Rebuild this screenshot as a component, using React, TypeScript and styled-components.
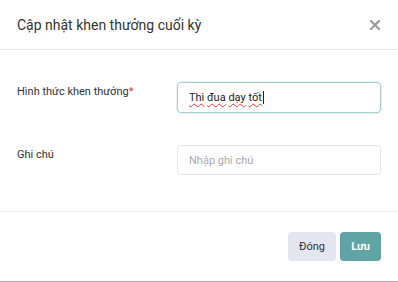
import React from "react";
import styled, { createGlobalStyle } from "styled-components";

const Global = createGlobalStyle`
  html, body { margin: 0; padding: 0; background: #fff; }
  body { font-family: Roboto, "Noto Sans", Arial, sans-serif; }
`;

const Modal = styled.div`
  width: 398px;
  height: 282px;
  box-sizing: border-box;
  background: #fff;
  border-bottom: 1px solid #a9a9a9;
  display: flex;
  flex-direction: column;
`;

const Header = styled.div`
  height: 50px;
  box-sizing: border-box;
  padding: 0 17px;
  display: flex;
  align-items: center;
  justify-content: space-between;
  border-bottom: 1px solid #ececec;
`;

const Title = styled.h2`
  margin: 0;
  font-size: 14px;
  font-weight: 400;
  color: #333;
`;

const Close = styled.button`
  border: 0;
  background: none;
  padding: 0;
  width: 12px;
  height: 12px;
  display: flex;
  align-items: center;
  justify-content: center;
  cursor: pointer;
`;

const Body = styled.div`
  flex: 0 0 auto;
  height: 162px;
  box-sizing: border-box;
  padding: 32px 17px 0 17px;
  display: flex;
  flex-direction: column;
  gap: 32px;
  border-bottom: 1px solid #ececec;
`;

const Row = styled.div`
  display: flex;
  align-items: flex-start;
`;

const Label = styled.label`
  width: 160px;
  flex: 0 0 160px;
  font-size: 11px;
  color: #333;
  padding-top: 3px;
`;

const Req = styled.span`
  color: #e53935;
`;

const Field = styled.div<{ $focused?: boolean; $h: number }>`
  flex: 1;
  height: ${(p) => p.$h}px;
  box-sizing: border-box;
  border: 1px solid ${(p) => (p.$focused ? "#a6cfcf" : "#e6e6e6")};
  border-radius: 4px;
  box-shadow: ${(p) => (p.$focused ? "0 0 0 1px rgba(166,207,207,0.25)" : "none")};
  padding: 0 11px;
  display: flex;
  align-items: center;
  font-size: 11px;
  color: #222;
`;

const Word = styled.span`
  text-decoration: underline wavy #e53935;
  text-decoration-thickness: 1px;
  text-underline-offset: 2px;
`;

const Caret = styled.span`
  display: inline-block;
  width: 1px;
  height: 13px;
  background: #222;
  margin-left: 1px;
`;

const Placeholder = styled.span`
  color: #a8a8b0;
`;

const Footer = styled.div`
  flex: 1;
  padding: 20px 17px 0;
  display: flex;
  justify-content: flex-end;
  align-items: flex-start;
  gap: 4px;
`;

const Btn = styled.button<{ $primary?: boolean }>`
  height: 29px;
  width: ${(p) => (p.$primary ? 41 : 48)}px;
  padding: 0;
  border: 0;
  border-radius: 4px;
  font-family: inherit;
  font-size: 11px;
  font-weight: ${(p) => (p.$primary ? 700 : 400)};
  background: ${(p) => (p.$primary ? "#60a4a5" : "#e3e6ef")};
  color: ${(p) => (p.$primary ? "#fff" : "#333")};
  cursor: pointer;
`;

export default function App() {
  return (
    <>
      <Global />
      <Modal>
        <Header>
          <Title>Cập nhật khen thưởng cuối kỳ</Title>
          <Close aria-label="Đóng">
            <svg width="10" height="10" viewBox="0 0 10 10">
              <path d="M1 1L9 9M9 1L1 9" stroke="#9a9a9a" strokeWidth="2.2" strokeLinecap="square" />
            </svg>
          </Close>
        </Header>
        <Body>
          <Row>
            <Label>
              Hình thức khen thưởng<Req>*</Req>
            </Label>
            <Field $focused $h={31}>
              <Word>Thi</Word>&nbsp;<Word>đua</Word>&nbsp;<Word>dạy</Word>&nbsp;<Word>tốt</Word>
              <Caret />
            </Field>
          </Row>
          <Row>
            <Label>Ghi chú</Label>
            <Field $h={30}>
              <Placeholder>Nhập ghi chú</Placeholder>
            </Field>
          </Row>
        </Body>
        <Footer>
          <Btn>Đóng</Btn>
          <Btn $primary>Lưu</Btn>
        </Footer>
      </Modal>
    </>
  );
}
